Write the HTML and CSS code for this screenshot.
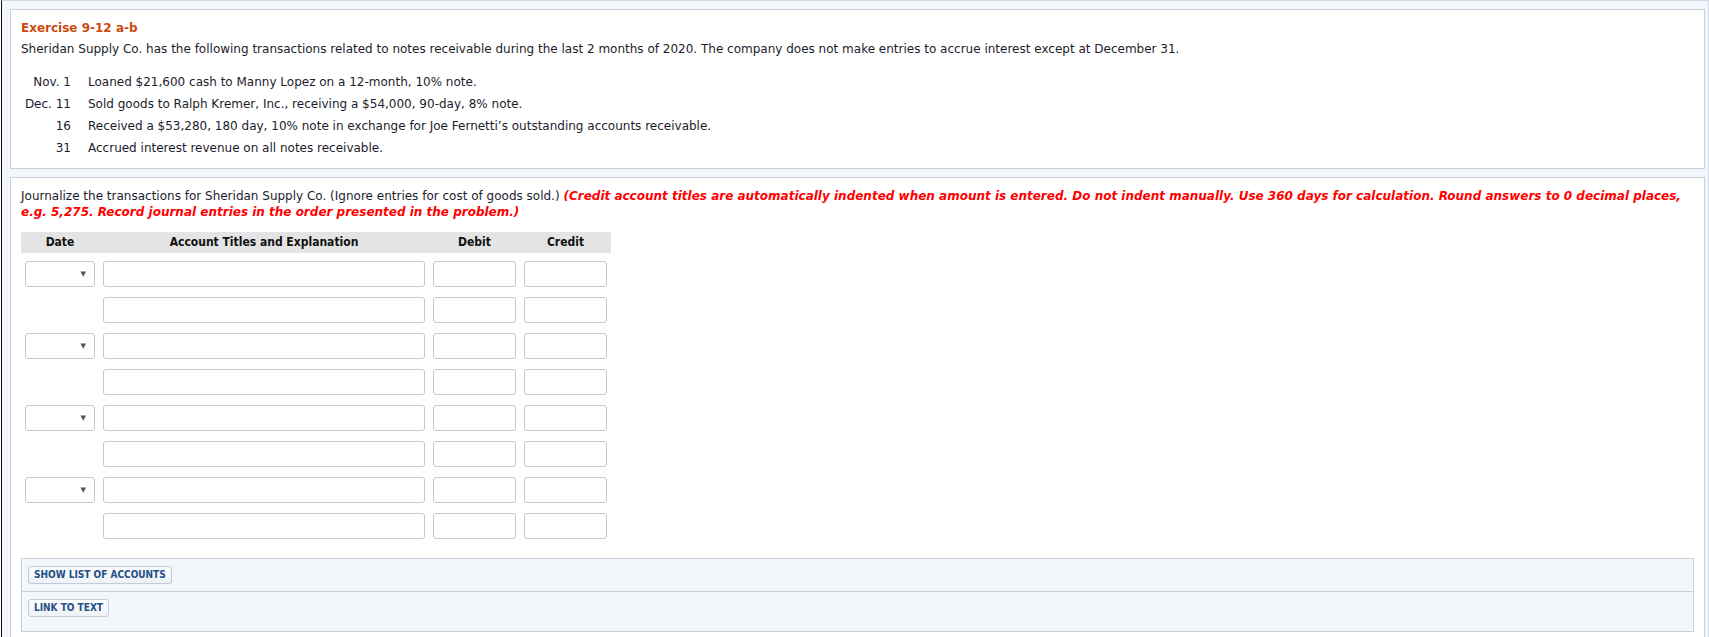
FILE: index.html
```html
<!DOCTYPE html>
<html>
<head>
<meta charset="utf-8">
<link rel="stylesheet" href="styles.css">
</head>
<body>
<div class="page">
  <div class="card card-problem">
    <div class="title">Exercise 9-12 a-b</div>
    <p class="intro">Sheridan Supply Co. has the following transactions related to notes receivable during the last 2 months of 2020. The company does not make entries to accrue interest except at December 31.</p>
    <div class="trans">
      <div class="tdate">Nov. 1</div><div class="tdesc">Loaned $21,600 cash to Manny Lopez on a 12-month, 10% note.</div>
      <div class="tdate">Dec. 11</div><div class="tdesc">Sold goods to Ralph Kremer, Inc., receiving a $54,000, 90-day, 8% note.</div>
      <div class="tdate">16</div><div class="tdesc">Received a $53,280, 180 day, 10% note in exchange for Joe Fernetti’s outstanding accounts receivable.</div>
      <div class="tdate">31</div><div class="tdesc">Accrued interest revenue on all notes receivable.</div>
    </div>
  </div>

  <div class="card card-answer">
    <p class="instr">Journalize the transactions for Sheridan Supply Co. (Ignore entries for cost of goods sold.) <span class="note">(Credit account titles are automatically indented when amount is entered. Do not indent manually. Use 360 days for calculation. Round answers to 0 decimal places, e.g. 5,275. Record journal entries in the order presented in the problem.)</span></p>

    <div class="journal">
      <div class="jh">Date</div>
      <div class="jh">Account Titles and Explanation</div>
      <div class="jh">Debit</div>
      <div class="jh">Credit</div>

      <div class="jc"><div class="sel"><span class="arrow">▼</span></div></div>
      <div class="jc"><div class="inp"></div></div>
      <div class="jc"><div class="inp"></div></div>
      <div class="jc"><div class="inp"></div></div>

      <div class="jc"></div>
      <div class="jc"><div class="inp"></div></div>
      <div class="jc"><div class="inp"></div></div>
      <div class="jc"><div class="inp"></div></div>

      <div class="jc"><div class="sel"><span class="arrow">▼</span></div></div>
      <div class="jc"><div class="inp"></div></div>
      <div class="jc"><div class="inp"></div></div>
      <div class="jc"><div class="inp"></div></div>

      <div class="jc"></div>
      <div class="jc"><div class="inp"></div></div>
      <div class="jc"><div class="inp"></div></div>
      <div class="jc"><div class="inp"></div></div>

      <div class="jc"><div class="sel"><span class="arrow">▼</span></div></div>
      <div class="jc"><div class="inp"></div></div>
      <div class="jc"><div class="inp"></div></div>
      <div class="jc"><div class="inp"></div></div>

      <div class="jc"></div>
      <div class="jc"><div class="inp"></div></div>
      <div class="jc"><div class="inp"></div></div>
      <div class="jc"><div class="inp"></div></div>

      <div class="jc"><div class="sel"><span class="arrow">▼</span></div></div>
      <div class="jc"><div class="inp"></div></div>
      <div class="jc"><div class="inp"></div></div>
      <div class="jc"><div class="inp"></div></div>

      <div class="jc"></div>
      <div class="jc"><div class="inp"></div></div>
      <div class="jc"><div class="inp"></div></div>
      <div class="jc"><div class="inp"></div></div>
    </div>

    <div class="tools">
      <div class="tool-row"><button class="btn">SHOW LIST OF ACCOUNTS</button></div>
      <div class="tool-row tool-last"><button class="btn">LINK TO TEXT</button></div>
    </div>
  </div>
</div>
</body>
</html>
```

FILE: styles.css
```css
* { box-sizing: border-box; }
html, body { margin: 0; padding: 0; }
body {
  background: #ffffff;
  font-family: "DejaVu Sans", Verdana, sans-serif;
  font-size: 12px;
  color: #1c1c2c;
}
.page {
  margin-left: 1px;
  border-left: 1px solid #111;
  border-top: 1px solid #cdd5df;
  border-right: 1px solid #d6dde6;
  background: #f3f6fa;
  padding: 8px 3px 20px 8px;
  min-height: 700px;
}
.card {
  background: #fff;
  border: 1px solid #c9d1dc;
}
.card-problem {
  padding: 10px 10px 12px 10px;
  margin-bottom: 8px;
}
.title {
  color: #cc4a0e;
  font-weight: bold;
  font-size: 12px;
  line-height: 16px;
}
.intro {
  margin: 5px 0 0 0;
  line-height: 16px;
}
.trans {
  display: grid;
  grid-template-columns: 48px auto;
  column-gap: 17px;
  row-gap: 6px;
  margin-top: 17px;
  padding-left: 2px;
  line-height: 16px;
}
.tdate { text-align: right; }
.card-answer {
  padding: 10px 10px 20px 10px;
}
.instr {
  margin: 0;
  line-height: 16px;
}
.note {
  color: #ff0000;
  font-weight: bold;
  font-style: italic;
}
.journal {
  display: grid;
  grid-template-columns: 78px 330px 91px 91px;
  width: 590px;
  margin-top: 12px;
  row-gap: 10px;
}
.jh {
  background: #e4e4e4;
  font-family: "DejaVu Sans Condensed", "DejaVu Sans", sans-serif;
  font-weight: bold;
  font-size: 12px;
  color: #111;
  text-align: center;
  height: 21px;
  line-height: 21px;
  margin-bottom: -2px;
}
.jc {
  padding: 0 4px;
  height: 26px;
}
.inp, .sel {
  height: 26px;
  border: 1px solid #c8c8c8;
  border-radius: 3px;
  background: #fff;
}
.sel {
  width: 70px;
  display: flex;
  align-items: center;
  justify-content: flex-end;
  padding-right: 8px;
}
.arrow {
  font-size: 7px;
  color: #555;
}
.tools {
  margin-top: 19px;
  width: 1673px;
  background: #f3f6fa;
  border: 1px solid #c9d1dc;
}
.tool-row {
  padding: 7px 6px 7px 6px;
  border-bottom: 1px solid #c9d1dc;
}
.tool-row.tool-last {
  border-bottom: none;
  padding: 7px 6px 14px 6px;
}
.btn {
  font-family: "DejaVu Sans Condensed", "DejaVu Sans", sans-serif;
  font-weight: bold;
  font-size: 10px;
  color: #244e86;
  background: linear-gradient(#fbfcfd, #eef2f6);
  border: 1px solid #c3ccd8;
  border-radius: 3px;
  height: 18px;
  padding: 0 5px;
  line-height: 16px;
  display: block;
}
```
